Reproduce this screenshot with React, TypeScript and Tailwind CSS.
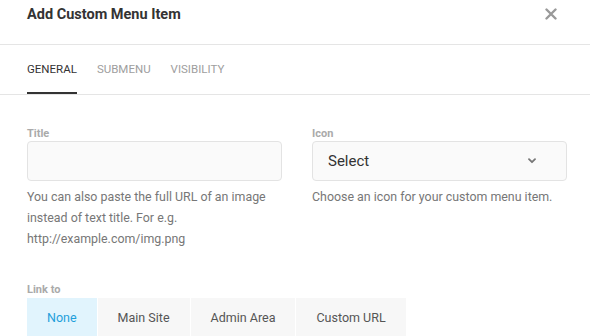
import React from "react";

export default function App() {
  const font = { fontFamily: "Roboto, 'Liberation Sans', sans-serif" };
  return (
    <div className="w-[600px] h-[336px] overflow-hidden bg-white" style={font}>
      <div className="w-[590px]">
        {/* Header */}
        <div className="h-[45px] border-b border-[#e5e5e5] flex items-start justify-between pl-[27px] pr-[33px] pt-[5px]">
          <div className="text-[14.5px] leading-[20px] font-bold text-[#333]">Add Custom Menu Item</div>
          <svg width="12" height="12" viewBox="0 0 12 12" className="mt-[3px]">
            <path d="M1.5 1.5 L10.5 10.5 M10.5 1.5 L1.5 10.5" stroke="#999" strokeWidth="2.4" strokeLinecap="round" />
          </svg>
        </div>
        {/* Tabs */}
        <div className="h-[50px] border-b border-[#e5e5e5] flex gap-5 pl-[27px] text-[11.5px] uppercase">
          <div className="h-full flex items-center border-b-2 border-[#333] text-[#333] pt-[2px]">General</div>
          <div className="h-full flex items-center text-[#9e9e9e]">Submenu</div>
          <div className="h-full flex items-center text-[#9e9e9e]">Visibility</div>
        </div>
        {/* Form */}
        <div className="pl-[27px] pr-[23px] pt-[31px]">
          <div className="grid grid-cols-2 gap-[30px]">
            <div>
              <div className="text-[11px] leading-[15px] font-bold text-[#aaa]">Title</div>
              <div className="h-[40px] rounded-[4px] border border-[#e3e3e3] bg-[#fafafa]" />
              <div className="mt-[5px] text-[12.4px] leading-[21px] text-[#777]">
                You can also paste the full URL of an image instead of text title. For e.g. http://example.com/img.png
              </div>
            </div>
            <div>
              <div className="text-[11px] leading-[15px] font-bold text-[#aaa]">Icon</div>
              <div className="h-[40px] rounded-[4px] border border-[#e3e3e3] bg-[#fafafa] flex items-center justify-between pl-[15px] pr-[30px]">
                <span className="text-[15px] text-[#333]">Select</span>
                <svg width="8" height="6" viewBox="0 0 8 6">
                  <path d="M1 1.2 L4 4.2 L7 1.2" fill="none" stroke="#777" strokeWidth="1.8" strokeLinecap="round" strokeLinejoin="round" />
                </svg>
              </div>
              <div className="mt-[5px] text-[12.4px] leading-[21px] text-[#777]">
                Choose an icon for your custom menu item.
              </div>
            </div>
          </div>
          <div className="mt-[33px]">
            <div className="text-[11px] leading-[15px] font-bold text-[#aaa]">Link to</div>
            <div className="flex mt-[1px] text-[12.5px]">
              <div className="h-[40px] px-5 flex items-center bg-[#e1f4fd] text-[#1f9fdb]">None</div>
              <div className="h-[40px] px-5 flex items-center bg-[#f7f7f7] text-[#555] border-l border-white">Main Site</div>
              <div className="h-[40px] px-5 flex items-center bg-[#f7f7f7] text-[#555] border-l border-white">Admin Area</div>
              <div className="h-[40px] px-5 flex items-center bg-[#f7f7f7] text-[#555] border-l border-white">Custom URL</div>
            </div>
          </div>
        </div>
      </div>
    </div>
  );
}
